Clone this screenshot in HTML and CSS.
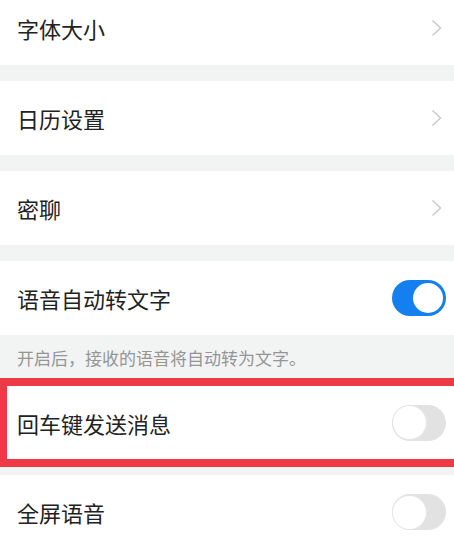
FILE: index.html
```html
<!DOCTYPE html>
<html lang="zh-CN">
<head>
  <meta charset="UTF-8">
  <meta name="viewport" content="width=device-width, initial-scale=1.0">
  <title>通用设置</title>
  <link rel="stylesheet" href="styles.css">
</head>
<body>
  <div class="settings">
    <div class="row">
      <span class="label">字体大小</span>
      <svg class="chevron" width="12" height="18" viewBox="0 0 12 18"><polyline points="1.5,1.5 9.5,9 1.5,16.5" /></svg>
    </div>
    <div class="gap"></div>
    <div class="row">
      <span class="label">日历设置</span>
      <svg class="chevron" width="12" height="18" viewBox="0 0 12 18"><polyline points="1.5,1.5 9.5,9 1.5,16.5" /></svg>
    </div>
    <div class="gap"></div>
    <div class="row">
      <span class="label">密聊</span>
      <svg class="chevron" width="12" height="18" viewBox="0 0 12 18"><polyline points="1.5,1.5 9.5,9 1.5,16.5" /></svg>
    </div>
    <div class="gap"></div>
    <div class="row">
      <span class="label">语音自动转文字</span>
      <span class="switch on"><span class="knob"></span></span>
    </div>
    <p class="caption">开启后，接收的语音将自动转为文字。</p>
    <div class="row marked">
      <span class="label">回车键发送消息</span>
      <span class="switch"><span class="knob"></span></span>
    </div>
    <div class="gap small"></div>
    <div class="row">
      <span class="label">全屏语音</span>
      <span class="switch"><span class="knob"></span></span>
    </div>
  </div>
</body>
</html>
```

FILE: styles.css
```css
body {
  margin: 0;
  background: #f2f3f3;
  font-family: "Noto Sans CJK SC", "Noto Sans", sans-serif;
  color: #222;
  overflow: hidden;
}
.settings {
  margin-top: -9px;
}
.row {
  height: 74px;
  background: #fff;
  display: flex;
  align-items: center;
  justify-content: space-between;
  padding: 0 8px 0 17px;
  box-sizing: border-box;
}
.label {
  font-size: 22px;
  line-height: 1;
}
.gap {
  height: 16px;
}
.gap.small {
  height: 8px;
}
.chevron {
  margin-right: 3px;
  fill: none;
  stroke: #cacaca;
  stroke-width: 1.5;
}
.caption {
  margin: 0;
  height: 43px;
  padding: 13px 0 0 17px;
  box-sizing: border-box;
  font-size: 17px;
  line-height: 20px;
  color: #959595;
}
.row.marked {
  height: 89px;
  border: 8px solid #ee3a46;
  border-left-width: 7px;
  border-right: none;
  padding-left: 10px;
  padding-right: 8px;
}
.switch {
  width: 54px;
  height: 36px;
  border-radius: 18px;
  background: #e2e2e2;
  display: flex;
  align-items: center;
  justify-content: flex-start;
  box-sizing: border-box;
  padding: 0 1px;
}
.switch .knob {
  width: 33px;
  height: 33px;
  border-radius: 50%;
  background: #fff;
  box-shadow: 0 0 0 1px #e6e6e6;
}
.switch.on {
  background: #1480f0;
  justify-content: flex-end;
  padding: 0 3px;
}
.switch.on .knob {
  width: 30px;
  height: 30px;
  box-shadow: none;
}
```
